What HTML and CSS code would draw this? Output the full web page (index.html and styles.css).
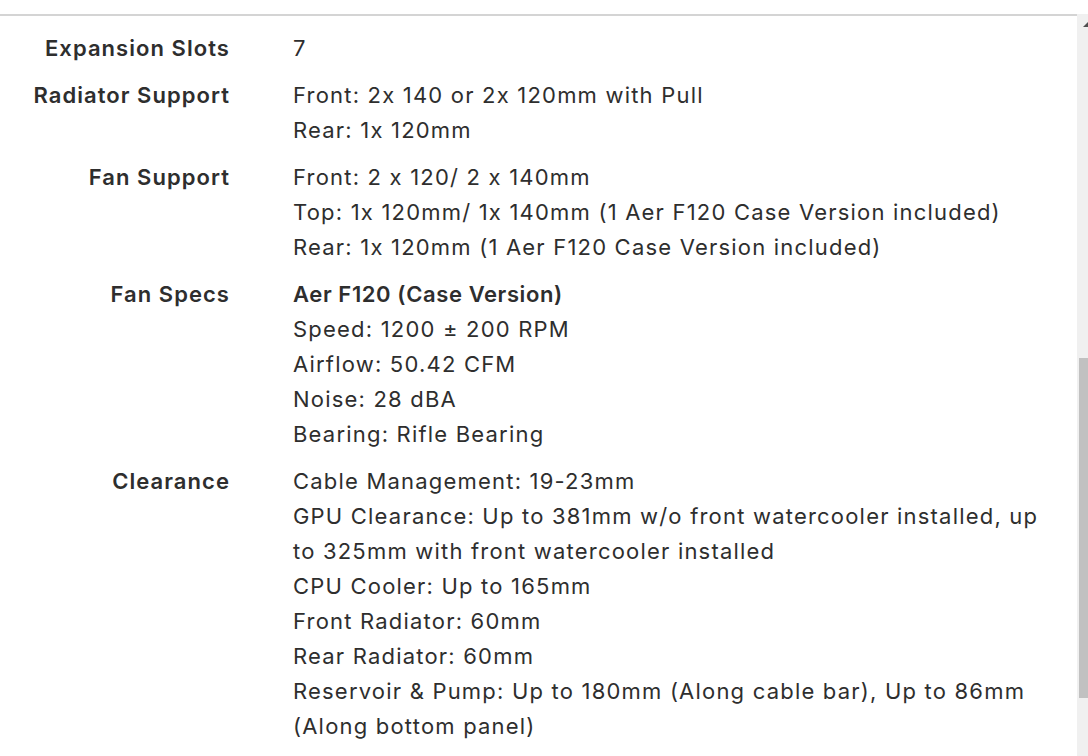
FILE: index.html
```html
<!DOCTYPE html>
<html lang="en">
<head>
<meta charset="utf-8">
<title>Specifications</title>
<link rel="stylesheet" href="styles.css">
</head>
<body>
<div class="top-strip"></div>
<div class="frame">
  <main class="content">
    <dl class="specs">
      <div class="row">
        <dt>Expansion Slots</dt>
        <dd>7</dd>
      </div>
      <div class="row">
        <dt>Radiator Support</dt>
        <dd>Front: 2x 140 or 2x 120mm with Pull<br>Rear: 1x 120mm</dd>
      </div>
      <div class="row">
        <dt>Fan Support</dt>
        <dd>Front: 2 x 120/ 2 x 140mm<br>Top: 1x 120mm/ 1x 140mm (1 Aer F120 Case Version included)<br>Rear: 1x 120mm (1 Aer F120 Case Version included)</dd>
      </div>
      <div class="row">
        <dt>Fan Specs</dt>
        <dd><strong>Aer F120 (Case Version)</strong><br>Speed: 1200 ± 200 RPM<br>Airflow: 50.42 CFM<br>Noise: 28 dBA<br>Bearing: Rifle Bearing</dd>
      </div>
      <div class="row">
        <dt>Clearance</dt>
        <dd>Cable Management: 19-23mm<br>GPU Clearance: Up to 381mm w/o front watercooler installed, up to 325mm with front watercooler installed<br>CPU Cooler: Up to 165mm<br>Front Radiator: 60mm<br>Rear Radiator: 60mm<br>Reservoir &amp; Pump: Up to 180mm (Along cable bar), Up to 86mm (Along bottom panel)</dd>
      </div>
    </dl>
  </main>
  <div class="scrollbar" aria-hidden="true">
    <div class="scroll-arrow"></div>
    <div class="scroll-thumb"></div>
  </div>
</div>
</body>
</html>
```

FILE: styles.css
```css
html, body {
  margin: 0;
  padding: 0;
  background: #ffffff;
  height: 100%;
  overflow: hidden;
}

body {
  font-family: Inter, "Liberation Sans", sans-serif;
  font-feature-settings: "calt" 0;
  color: #2e2e2e;
}

.top-strip {
  height: 14px;
}

.frame {
  display: flex;
  height: 742px;
}

.content {
  flex: 1;
  border-top: 2px solid #d4d4d4;
  padding-top: 9px;
}

.specs {
  margin: 0;
}

.row {
  display: grid;
  grid-template-columns: 229px 752px;
  column-gap: 64px;
  padding: 6px 0;
}

.row dt {
  text-align: right;
  font-weight: 600;
  font-size: 22px;
  line-height: 35px;
  letter-spacing: 1.05px;
  margin-right: -1px;
}

.row dd {
  margin: 0;
  font-size: 22px;
  line-height: 35px;
  letter-spacing: 1.2px;
}

.row dd strong {
  font-weight: 600;
  letter-spacing: 0.6px;
}

.scrollbar {
  width: 11px;
  background: #f0f0f0;
  display: flex;
  flex-direction: column;
  padding-top: 8px;
}

.scroll-arrow {
  margin-left: 6px;
  width: 0;
  height: 0;
  border-left: 5px solid transparent;
  border-bottom: 5px solid #505050;
}

.scroll-thumb {
  margin-top: 331px;
  margin-left: 2px;
  height: 340px;
  background: #c1c1c1;
}
```
